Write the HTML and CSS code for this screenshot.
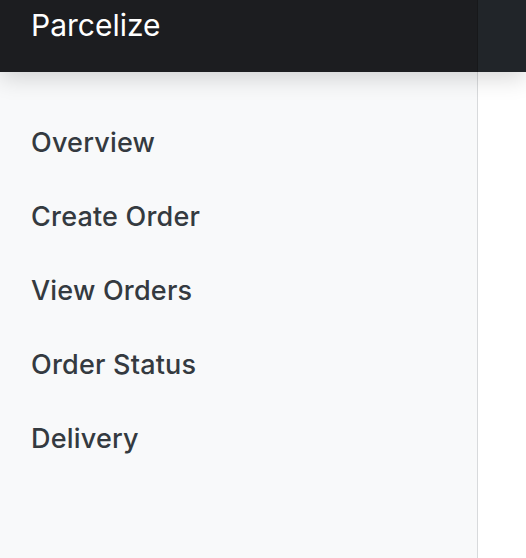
FILE: index.html
```html
<!DOCTYPE html>
<html>
<head>
<meta charset="utf-8">
<link rel="stylesheet" href="styles.css">
</head>
<body>
<div class="app">
  <header class="topbar">
    <div class="brand">Parcelize</div>
    <div class="topbar-rest"></div>
  </header>
  <div class="main">
    <nav class="sidebar">
      <a class="nav-link">Overview</a>
      <a class="nav-link">Create Order</a>
      <a class="nav-link">View Orders</a>
      <a class="nav-link">Order Status</a>
      <a class="nav-link">Delivery</a>
    </nav>
    <div class="content"></div>
  </div>
</div>
</body>
</html>
```
FILE: styles.css
```css
html, body {
  margin: 0;
  padding: 0;
  height: 100%;
}
body {
  font-family: Inter, "Noto Sans", sans-serif;
  background: #fff;
  overflow: hidden;
}
.app {
  display: flex;
  flex-direction: column;
  height: 558px;
}
.topbar {
  display: flex;
  height: 72px;
  flex: none;
  background: #212529;
  position: relative;
  z-index: 2;
  box-shadow: 0 6px 22px rgba(0,0,0,0.16);
}
.brand {
  width: 478px;
  box-sizing: border-box;
  background: #1c1d20;
  border-right: 1px solid #17181a;
  color: #fff;
  font-size: 30px;
  font-weight: 400;
  padding: 7px 0 0 31px;
  line-height: 36px;
}
.topbar-rest {
  flex: 1;
}
.main {
  flex: 1;
  display: flex;
}
.sidebar {
  width: 478px;
  box-sizing: border-box;
  background: #f8f9fa;
  border-right: 1px solid #d8dadc;
  display: flex;
  flex-direction: column;
  padding-top: 55px;
  gap: 42px;
}
.nav-link {
  display: block;
  padding-left: 31px;
  font-size: 27px;
  font-weight: 500;
  letter-spacing: 0.2px;
  color: #343a40;
  line-height: 32px;
}
.content {
  flex: 1;
  background: #fff;
}
```
